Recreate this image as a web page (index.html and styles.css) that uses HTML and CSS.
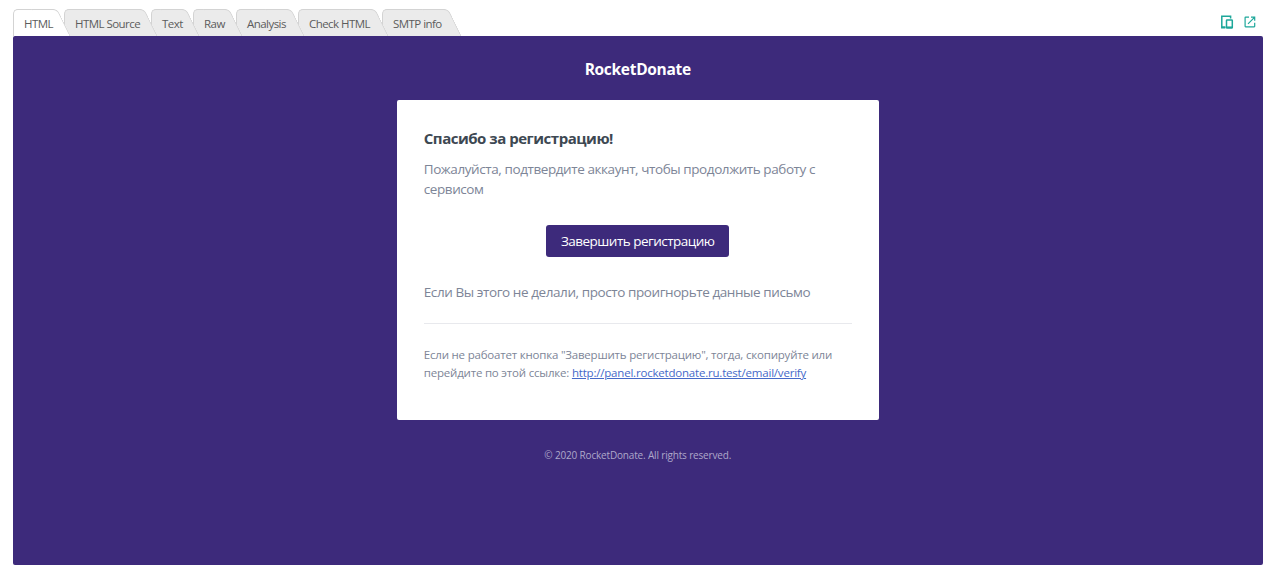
FILE: index.html
```html
<!DOCTYPE html>
<html lang="ru">
<head>
    <meta charset="UTF-8">
    <meta name="viewport" content="width=device-width, initial-scale=1.0">
    <title>RocketDonate</title>
    <link rel="stylesheet" href="styles.css">
</head>
<body>
    <div class="viewer">
        <div class="toolbar">
            <div class="tabs">
                <div class="tab tab-html active"><span>HTML</span></div>
                <div class="tab tab-source"><span>HTML Source</span></div>
                <div class="tab tab-text"><span>Text</span></div>
                <div class="tab tab-raw"><span>Raw</span></div>
                <div class="tab tab-analysis"><span>Analysis</span></div>
                <div class="tab tab-check"><span>Check HTML</span></div>
                <div class="tab tab-smtp"><span>SMTP info</span></div>
            </div>
            <div class="tools">
                <svg class="icon-devices" width="14" height="15" viewBox="0 0 14 15">
                    <path d="M5.4 12.8H1.8V1.2H10.6V3.6" />
                    <path d="M1.8 12H5.4" />
                    <rect x="6.5" y="5" width="5.8" height="8" rx="0.6" />
                    <path d="M6.5 12.2H12.3" />
                </svg>
                <svg class="icon-open" width="12" height="12" viewBox="0 0 12 12">
                    <path d="M5 1.1H1.6Q1.1 1.1 1.1 1.6V10.3Q1.1 10.8 1.6 10.8H10.2Q10.7 10.8 10.7 10.3V6.8" />
                    <path d="M7 1.1H10.7V4.8M10.5 1.3L4 7.8" />
                </svg>
            </div>
        </div>

        <div class="mail">
            <div class="mail-logo">RocketDonate</div>
            <div class="mail-body">
                <h1>Спасибо за регистрацию!</h1>
                <p>Пожалуйста, подтвердите аккаунт, чтобы продолжить работу с<br>сервисом</p>
                <a class="button">Завершить регистрацию</a>
                <p>Если Вы этого не делали, просто проигнорьте данные письмо</p>
                <div class="subcopy">
                    <div>Если не рабоатет кнопка "Завершить регистрацию", тогда, скопируйте или</div>
                    <div>перейдите по этой ссылке: <a class="link">http://panel.rocketdonate.ru.test/email/verify</a></div>
                </div>
            </div>
            <div class="mail-footer">© 2020 RocketDonate. All rights reserved.</div>
        </div>
    </div>
</body>
</html>
```
FILE: styles.css
```css
* {
    box-sizing: border-box;
}

body {
    margin: 0;
    background: #fff;
    font-family: 'Open Sans', 'Noto Sans', sans-serif;
}

.viewer {
    height: 576px;
    padding: 8px 17.5px 0 13px;
}

.toolbar {
    display: flex;
    justify-content: space-between;
    height: 28px;
}

.tabs {
    display: flex;
    height: 28px;
    padding-right: 12px;
    overflow: hidden;
}

.tab {
    position: relative;
    height: 28px;
    padding: 8px 0 0 11px;
    font-size: 11.5px;
    letter-spacing: -0.55px;
    line-height: 16px;
    white-space: nowrap;
    color: #5c5c5c;
}

.tab span {
    position: relative;
    z-index: 2;
}

/* left side of the tab */
.tab::before {
    content: '';
    position: absolute;
    top: 1px;
    left: 0;
    right: 10px;
    height: 28px;
    background: #ebebeb;
    border: 1px solid #d3d3d3;
    border-right: none;
    border-radius: 5px 0 0 0;
}

/* slanted right side */
.tab::after {
    content: '';
    position: absolute;
    top: 1px;
    right: -8px;
    width: 25px;
    height: 28px;
    background: #ebebeb;
    border: 1px solid #d3d3d3;
    border-left: none;
    border-radius: 0 5px 0 0;
    transform: skewX(26deg);
    transform-origin: 100% 100%;
}

.tab.active::before,
.tab.active::after {
    background: #fff;
}

.tab-html { width: 51px; z-index: 7; }
.tab-source { width: 87px; z-index: 6; }
.tab-text { width: 42px; z-index: 5; }
.tab-raw { width: 43px; z-index: 4; }
.tab-analysis { width: 62px; z-index: 3; }
.tab-check { width: 84px; z-index: 2; }
.tab-smtp { width: 73px; z-index: 1; }

.tools {
    display: flex;
    gap: 10px;
    padding: 7px 6.5px 0 0;
}

.tools svg {
    fill: none;
    stroke: #1da79a;
}

.icon-devices {
    stroke-width: 1.5;
}

.icon-open {
    margin-top: 1px;
    stroke-width: 1.2;
}

.mail {
    display: flex;
    flex-direction: column;
    align-items: center;
    height: 529px;
    background: #3d2a7b;
    border-radius: 2px;
}

.mail-logo {
    height: 64px;
    padding-top: 23px;
    font-size: 15.5px;
    font-weight: 700;
    letter-spacing: -0.3px;
    line-height: 21px;
    color: #fff;
}

.mail-body {
    width: 482px;
    height: 320px;
    padding: 28px 27px 0;
    background: #fff;
    border-radius: 2px;
}

h1 {
    margin: 0 0 11px;
    font-size: 15px;
    letter-spacing: -0.48px;
    line-height: 20px;
    color: #3d4852;
}

p {
    margin: 0;
    font-size: 13.5px;
    letter-spacing: -0.42px;
    line-height: 20px;
    color: #7d8597;
    white-space: nowrap;
}

.button {
    display: block;
    width: 183px;
    height: 32px;
    margin: 26px auto 25px;
    border-radius: 3px;
    background: #3d2a7b;
    color: #fff;
    font-size: 13.5px;
    letter-spacing: -0.52px;
    line-height: 32px;
    text-align: center;
    white-space: nowrap;
}

.subcopy {
    margin-top: 21px;
    padding-top: 22px;
    border-top: 1px solid #e8e9ed;
    font-size: 11.5px;
    letter-spacing: -0.2px;
    line-height: 18px;
    color: #7d8597;
    white-space: nowrap;
}

.link {
    color: #4669c9;
    text-decoration: underline;
}

.mail-footer {
    padding-top: 27px;
    font-size: 10px;
    letter-spacing: -0.17px;
    line-height: 16px;
    color: #aea8ca;
}
```
